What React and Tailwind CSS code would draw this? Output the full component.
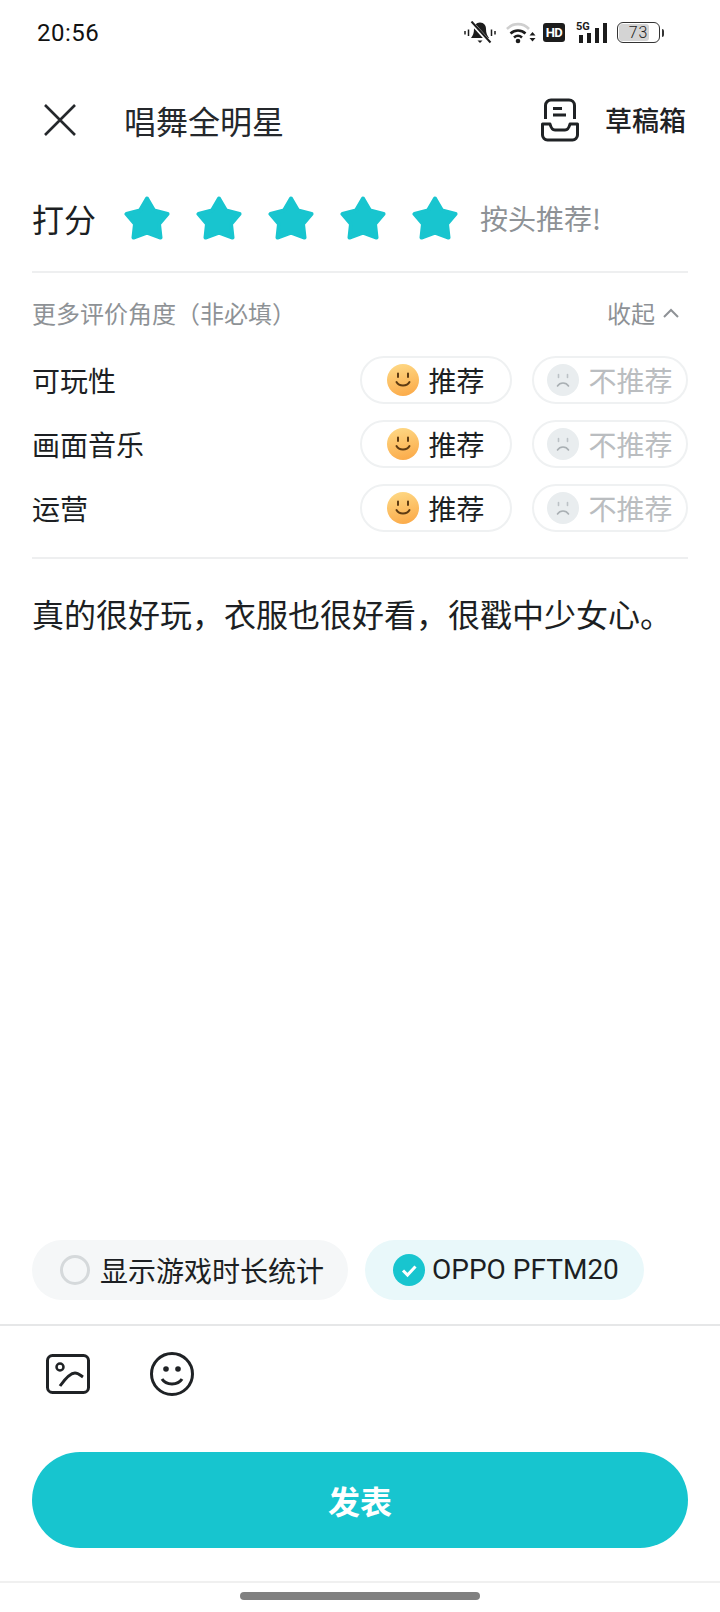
import { useState } from 'react';

const FONT = "font-['Noto_Sans_CJK_SC','Roboto',sans-serif]";
const LATIN = "font-['Roboto',sans-serif]";

const Star = () => (
    <svg width="46" height="44" viewBox="0 0 46 44" className="shrink-0 blur-[0.4px]">
        <path
            d="M23 2.500 L30 14.500 L43.500 18 L35 28 L36.500 41.500 L23 36.500 L9.500 41.500 L11 28 L2.500 18 L16 14.500 Z"
            fill="#18c5cf"
            stroke="#18c5cf"
            strokeWidth="4"
            strokeLinejoin="round"
        />
    </svg>
);

const HappyFace = () => (
    <svg width="32" height="32" viewBox="0 0 32 32" className="shrink-0">
        <defs>
            <linearGradient id="happy" x1="0.35" y1="0" x2="0.6" y2="1">
                <stop offset="0" stopColor="#fed783" />
                <stop offset="1" stopColor="#fbab4a" />
            </linearGradient>
        </defs>
        <circle cx="16" cy="16" r="16" fill="url(#happy)" />
        <path d="M11 9.500v3.500M21 9.500v3.500" stroke="#5e3b12" strokeWidth="2" strokeLinecap="round" />
        <path d="M9.500 18c2.500 4.500 10.500 4.500 13 0" fill="none" stroke="#5e3b12" strokeWidth="2" strokeLinecap="round" />
    </svg>
);

const SadFace = () => (
    <svg width="32" height="32" viewBox="0 0 32 32" className="shrink-0">
        <circle cx="16" cy="16" r="16" fill="#e9edef" />
        <path d="M11.500 10.500v3M20.500 10.500v3" stroke="#bcc2c6" strokeWidth="1.600" strokeLinecap="round" />
        <path d="M10.500 22c2.500-4 8.500-4 11 0" fill="none" stroke="#a9afb3" strokeWidth="1.600" strokeLinecap="round" />
    </svg>
);

const AspectRow = ({ label }) => (
    <div className="flex h-[48px] items-center">
        <span className="flex-1 text-[28px] leading-none text-[#1c1f23]">{label}</span>
        <div className="flex h-[48px] w-[152px] items-center justify-center gap-[9px] rounded-full border-2 border-[#eff1f2]">
            <HappyFace />
            <span className="text-[28px] leading-none text-[#1c1f23]">推荐</span>
        </div>
        <div className="ml-[20px] flex h-[48px] w-[156px] items-center justify-center gap-[9px] rounded-full border-2 border-[#eff1f2]">
            <SadFace />
            <span className="text-[28px] leading-none text-[#babdc0]">不推荐</span>
        </div>
    </div>
);

const StatusIcons = () => (
    <div className="flex items-center text-[#1c1c1c]">
        {/* muted bell */}
        <svg width="32" height="24" viewBox="0 0 32 24" className="mr-[10px]">
            <path d="M16 1.500c-4 0-6 3-6 6.500 0 4-1 6.500-3 9h18c-2-2.500-3-5-3-9 0-3.500-2-6.500-6-6.500z" fill="currentColor" />
            <path d="M13.500 19.500h5l-2.500 2.500z" fill="currentColor" />
            <path d="M6 0l20 22" stroke="#fff" strokeWidth="4" />
            <path d="M7.500 0.500l19 21" stroke="currentColor" strokeWidth="2" />
            <path d="M1 10v3.500M31 10v3.500M4.500 8.500v6.500M27.500 8.500v6.500" stroke="currentColor" strokeWidth="1.500" />
        </svg>
        {/* wifi */}
        <svg width="30" height="22" viewBox="0 0 30 22" className="mr-[7px]">
            <path d="M1 7C7 0.500 17 0.500 23 7" fill="none" stroke="#cfcfcf" strokeWidth="2.600" />
            <path d="M4.500 11.500C9 7.500 15 7.500 19.500 11.500M8 15.500c2.500-2.200 5.500-2.200 8 0" fill="none" stroke="currentColor" strokeWidth="2.600" />
            <circle cx="12" cy="19" r="2.300" fill="currentColor" />
            <path d="M23.500 13.500h6l-3-3.500zM23.500 16h6l-3 3.500z" fill="currentColor" />
        </svg>
        {/* HD */}
        <div className={`mr-[11px] flex h-[19px] w-[22px] items-center justify-center rounded-[3px] bg-[#1c1c1c] text-[13px] font-bold leading-none tracking-[-0.5px] text-white ${LATIN}`}>
            HD
        </div>
        {/* 5G signal */}
        <div className="relative mr-[10px] h-[21px] w-[31px]">
            <span className={`absolute left-0 top-[-1px] text-[11px] font-bold leading-none ${LATIN}`}>5G</span>
            <div className="absolute bottom-0 left-[3px] flex items-end gap-[4px]">
                <div className="h-[8px] w-[4px] bg-[#1c1c1c]" />
                <div className="h-[10px] w-[4px] bg-[#1c1c1c]" />
                <div className="h-[15px] w-[4px] bg-[#1c1c1c]" />
                <div className="h-[20px] w-[4px] bg-[#1c1c1c]" />
            </div>
        </div>
        {/* battery */}
        <div className="relative flex h-[21px] w-[43px] items-center justify-center overflow-hidden rounded-[6px] border-[1.5px] border-[#333]">
            <div className="absolute inset-y-[1px] left-[1px] w-[30px] rounded-[3px] bg-[#d4d4d4]" />
            <span className={`relative text-[16px] font-light leading-none tracking-[1px] text-[#222] ${LATIN}`}>73</span>
        </div>
        <div className="ml-[2px] h-[8px] w-[2px] rounded-r bg-[#333]" />
    </div>
);

export default function App() {
    const [rating] = useState(5);
    const aspects = ['可玩性', '画面音乐', '运营'];

    return (
        <div className={`flex h-[1612px] w-[720px] flex-col overflow-hidden bg-white ${FONT}`}>
            <div className="flex h-[66px] items-center justify-between pb-[1px] pl-[37px] pr-[56px]">
                <span className={`text-[24px] leading-none tracking-[0.5px] text-[#111] ${LATIN}`}>20:56</span>
                <StatusIcons />
            </div>

            <header className="flex h-[108px] items-center pl-[44px] pr-[34px]">
                <svg width="32" height="32" viewBox="0 0 32 32" className="shrink-0">
                    <path d="M1 1l30 30M31 1L1 31" stroke="#25282c" strokeWidth="2.600" fill="none" />
                </svg>
                <h1 className="ml-[48px] flex-1 pb-[1px] text-[32px] font-normal leading-none text-[#25282c]">唱舞全明星</h1>
                <svg width="38" height="44" viewBox="0 0 38 44" className="mr-[26px] shrink-0">
                    <path d="M4.500 21V7.500a5.500 5.500 0 0 1 5.500-5.500h18a5.500 5.500 0 0 1 5.500 5.500V21" fill="none" stroke="#1f2225" strokeWidth="3" />
                    <path d="M12 10.500h9M12 17h13" stroke="#1f2225" strokeWidth="3" />
                    <path d="M1.500 26H9c1 4 3 6 5 6h10c2 0 4-2 5-6h7.500v11a5 5 0 0 1-5 5H6.500a5 5 0 0 1-5-5z" fill="none" stroke="#1f2225" strokeWidth="3" strokeLinejoin="round" />
                </svg>
                <span className="pb-[1px] text-[27px] font-medium leading-none text-[#1f2225]">草稿箱</span>
            </header>

            <section className="mx-[32px] flex h-[99px] items-center border-b-2 border-[#eeeff0] pb-[9px]">
                <span className="text-[32px] leading-none text-[#1c1f23]">打分</span>
                <div className="ml-[28px] flex gap-[26px]">
                    {Array.from({ length: rating }).map((_, i) => (
                        <Star key={i} />
                    ))}
                </div>
                <span className="ml-[22px] text-[28px] leading-none text-[#8e9296]">按头推荐!</span>
            </section>

            <div className="mx-[32px] flex h-[83px] items-center justify-between pb-[3px]">
                <span className="text-[24px] leading-none text-[#8e9296]">{'更多评价角度\uFF08非必填\uFF09'}</span>
                <span className="mr-[2px] flex items-center text-[24px] leading-none text-[#8e9296]">
                    收起
                    <svg width="16" height="10" viewBox="0 0 16 10" className="ml-[8px] mr-[7px]">
                        <path d="M1 9l7-7 7 7" fill="none" stroke="#8e9296" strokeWidth="2" />
                    </svg>
                </span>
            </div>

            <div className="mx-[32px] flex flex-col gap-[16px] border-b-2 border-[#eeeff0] pb-[25px]">
                {aspects.map((label) => (
                    <AspectRow key={label} label={label} />
                ))}
            </div>

            <p className="mx-[32px] mt-[31px] text-[32px] leading-[46px] text-[#1c1f23]">
                {'真的很好玩\uFF0C衣服也很好看\uFF0C很戳中少女心。'}
            </p>

            <div className="flex-1" />

            <div className="mx-[32px] flex gap-[17px]">
                <div className="flex h-[60px] items-center rounded-full bg-[#f5f7f8] pl-[28px] pr-[24px]">
                    <div className="h-[30px] w-[30px] rounded-full border-[3px] border-[#d5d9db]" />
                    <span className="ml-[10px] text-[28px] leading-none text-[#1c1f23]">显示游戏时长统计</span>
                </div>
                <div className="flex h-[60px] items-center rounded-full bg-[#e9f8fa] pl-[28px] pr-[25px]">
                    <svg width="32" height="32" viewBox="0 0 32 32" className="shrink-0">
                        <circle cx="16" cy="16" r="16" fill="#18c5cf" />
                        <path d="M10 16.500l4.500 4.500 8-8.500" fill="none" stroke="#fff" strokeWidth="3" />
                    </svg>
                    <span className={`ml-[7px] text-[28px] leading-none text-[#1c1f23] ${LATIN}`}>OPPO PFTM20</span>
                </div>
            </div>

            <div className="mt-[24px] flex h-[97px] items-start gap-[60px] border-t-2 border-[#e6e7e8] pl-[46px] pt-[26px]">
                <svg width="44" height="40" viewBox="0 0 44 40" className="mt-[2px] shrink-0">
                    <rect x="1.500" y="1.500" width="41" height="37" rx="5" fill="none" stroke="#1f2225" strokeWidth="3" />
                    <circle cx="14" cy="13" r="3.500" fill="none" stroke="#1f2225" strokeWidth="2.500" />
                    <path d="M14 32C19 25 24 19 29 19c3 0 5 2 8 4" fill="none" stroke="#1f2225" strokeWidth="3" />
                </svg>
                <svg width="44" height="44" viewBox="0 0 44 44" className="shrink-0">
                    <circle cx="22" cy="22" r="20.500" fill="none" stroke="#1f2225" strokeWidth="3" />
                    <circle cx="16" cy="17" r="2.800" fill="#1f2225" />
                    <circle cx="28" cy="17" r="2.800" fill="#1f2225" />
                    <path d="M12 27c4 6.500 16 6.500 20 0" fill="none" stroke="#1f2225" strokeWidth="3" />
                </svg>
            </div>

            <button className="mx-[32px] mt-[31px] h-[96px] rounded-full bg-[#17c5cf] text-[32px] font-bold leading-none text-white">
                发表
            </button>

            <div className="mt-[33px] flex h-[31px] justify-center border-t-2 border-[#f0f0f0] pt-[9px]">
                <div className="h-[8px] w-[240px] rounded-full bg-[#808080]" />
            </div>
        </div>
    );
}
